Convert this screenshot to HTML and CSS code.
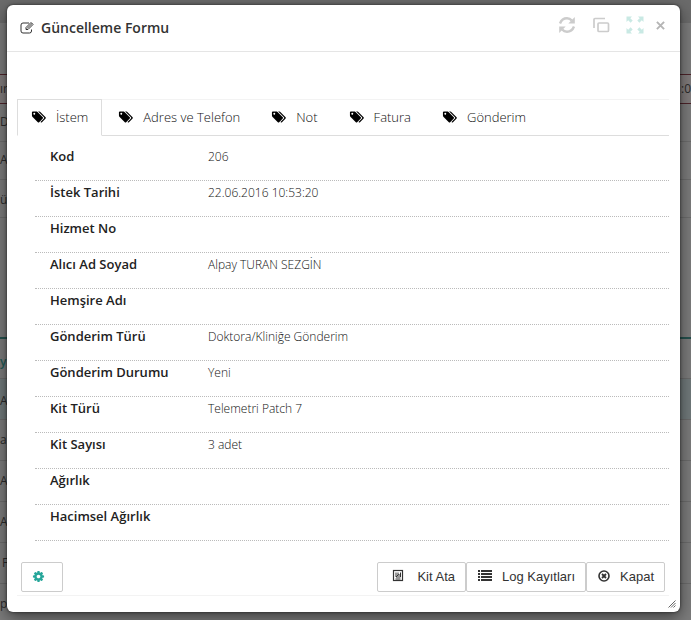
FILE: index.html
```html
<!DOCTYPE html>
<html lang="tr">
<head>
<meta charset="utf-8">
<meta name="viewport" content="width=device-width, initial-scale=1">
<title>Güncelleme Formu</title>
<link rel="stylesheet" href="styles.css">
</head>
<body>
<svg class="sprite" aria-hidden="true">
  <symbol id="tags" viewBox="0 0 2048 1792"><path d="M576 448q0-53-37.5-90.5t-90.5-37.5-90.5 37.5-37.5 90.5 37.5 90.5 90.5 37.5 90.5-37.5 37.5-90.5zm1067 576q0 53-37 90l-491 492q-39 37-91 37-53 0-90-37l-715-716q-38-37-64.5-101t-26.5-117v-416q0-52 38-90t90-38h416q53 0 117 26.5t102 64.5l715 714q37 39 37 91zm384 0q0 53-37 90l-491 492q-39 37-91 37-36 0-59-14t-53-45l470-470q37-37 37-90 0-52-37-91l-715-714q-38-38-102-64.5t-117-26.5h224q53 0 117 26.5t102 64.5l715 714q37 39 37 91z"/></symbol>
</svg>

<div class="page" aria-hidden="true">
  <div class="bar"></div>
  <div class="spacer"></div>
  <div class="alert"><span>ır</span><span>:0</span></div>
  <div class="line">D</div>
  <div class="line">A</div>
  <div class="line last">ü</div>
  <div class="gap"></div>
  <div class="grid-head">y</div>
  <div class="grid-row active">A</div>
  <div class="grid-row">a</div>
  <div class="grid-row">A</div>
  <div class="grid-row">A</div>
  <div class="grid-row indent">F</div>
  <div class="grid-row">p</div>
  <div class="grid-foot"><i></i><i></i><i></i><i></i><i></i><i></i></div>
</div>

<div class="overlay">
<section class="dialog" role="dialog" aria-labelledby="title">
  <header class="head">
    <svg class="edit" viewBox="0 0 14 14" fill="none" stroke="currentColor"><path d="M9 2H3Q1 2 1 4v6q0 2 2 2h6.500q2 0 2-2V8.500"/><path d="M6 6.500 11 1.500 13 3.500 8 8.500H6z"/><path d="m7 7.500 5-5"/></svg>
    <h1 id="title">Güncelleme Formu</h1>
    <div class="tools">
      <button type="button" aria-label="Yenile"><svg class="tool" viewBox="0 0 18 18"><path d="M2 7.500Q4 2.300 9 2.300q3 0 4.800 2.200" fill="none" stroke="currentColor" stroke-width="2.400"/><path d="M16.800 1v6.500h-6.500z" fill="currentColor"/><path d="M16 10.500Q14 15.700 9 15.700q-3 0-4.800-2.200" fill="none" stroke="currentColor" stroke-width="2.400"/><path d="M1.200 17v-6.500h6.500z" fill="currentColor"/></svg></button>
      <button type="button" aria-label="Pencere"><svg class="tool" viewBox="0 0 18 18" fill="none" stroke="currentColor" stroke-width="1.700"><path d="M2 12V3.500q0-1 1-1h10"/><rect x="6" y="7" width="10.500" height="8.500" rx="1"/></svg></button>
      <button type="button" class="expand" aria-label="Tam ekran"><svg class="tool" viewBox="0 0 18 18"><path d="M.5.500H6L4.300 2.200l2.400 2.400-2.100 2.100-2.400-2.400L.5 6zM17.500.500H12l1.700 1.700-2.400 2.400 2.100 2.100 2.400-2.400L17.500 6zM.5 17.500H6l-1.700-1.700 2.400-2.400-2.100-2.100-2.400 2.400L.5 12zM17.500 17.500H12l1.700-1.700-2.400-2.400 2.100-2.100 2.400 2.400L17.500 12z" fill="currentColor"/></svg></button>
      <button type="button" class="close" aria-label="Kapat"><svg viewBox="0 0 8 8" fill="none" stroke="currentColor" stroke-width="1.700"><path d="m.8.8 6.400 6.400M7.200.8.8 7.200"/></svg></button>
    </div>
  </header>

  <div class="body">
    <nav class="tabs">
      <a class="on" href="#istem"><svg><use href="#tags"/></svg>İstem</a>
      <a href="#adres"><svg><use href="#tags"/></svg>Adres ve Telefon</a>
      <a href="#not"><svg><use href="#tags"/></svg>Not</a>
      <a href="#fatura"><svg><use href="#tags"/></svg>Fatura</a>
      <a href="#gonderim"><svg><use href="#tags"/></svg>Gönderim</a>
    </nav>

    <dl class="fields" id="istem">
      <div><dt>Kod</dt><dd>206</dd></div>
      <div><dt>İstek Tarihi</dt><dd>22.06.2016 10:53:20</dd></div>
      <div><dt>Hizmet No</dt><dd></dd></div>
      <div><dt>Alıcı Ad Soyad</dt><dd>Alpay TURAN SEZGİN</dd></div>
      <div><dt>Hemşire Adı</dt><dd></dd></div>
      <div><dt>Gönderim Türü</dt><dd>Doktora/Kliniğe Gönderim</dd></div>
      <div><dt>Gönderim Durumu</dt><dd>Yeni</dd></div>
      <div><dt>Kit Türü</dt><dd>Telemetri Patch 7</dd></div>
      <div><dt>Kit Sayısı</dt><dd>3 adet</dd></div>
      <div><dt>Ağırlık</dt><dd></dd></div>
      <div><dt>Hacimsel Ağırlık</dt><dd></dd></div>
    </dl>

    <footer class="actions">
      <button type="button" class="btn settings" aria-label="Ayarlar"><svg viewBox="0 0 1792 1792" fill="currentColor"><path d="M1152 896q0-106-75-181t-181-75-181 75-75 181 75 181 181 75 181-75 75-181zm512-109v222q0 12-8 23t-20 13l-185 28q-19 54-39 91 35 50 107 138 10 12 10 25t-9 23q-27 37-99 108t-94 71q-12 0-26-9l-138-108q-44 23-91 38-16 136-29 186-7 28-36 28h-222q-14 0-24.500-8.500t-11.500-21.500l-28-184q-49-16-90-37l-141 107q-10 9-25 9-14 0-25-11-126-114-165-168-7-10-7-23 0-12 8-23 15-21 51-66.500t54-70.500q-27-50-41-99l-183-27q-13-2-21-12.500t-8-23.500v-222q0-12 8-23t19-13l186-28q14-46 39-92-40-57-107-138-10-12-10-24 0-10 9-23 26-36 98.500-107.500t94.500-71.500q13 0 26 10l138 107q44-23 91-38 16-136 29-186 7-28 36-28h222q14 0 24.500 8.500t11.500 21.500l28 184q49 16 90 37l142-107q9-9 24-9 13 0 25 10 129 119 165 170 7 8 7 22 0 12-8 23-15 21-51 66.500t-54 70.500q26 50 41 98l183 28q13 2 21 12.500t8 23.500z"/></svg></button>
      <div class="group">
        <button type="button" class="btn"><svg class="wide" viewBox="0 0 18 14" fill="none" stroke="currentColor"><rect x="4.500" y="1.500" width="9" height="10" stroke-width="1.200"/><path d="M6.500 10h5"/><path d="M7 3.500V8h4.500V3.500M9 3.500V6h2.500M7 8l2.500-2.500"/></svg>Kit Ata</button>
        <button type="button" class="btn"><svg viewBox="0 0 14 14" fill="currentColor"><path d="M0 1h2v2H0zM3 1h11v2H3zM0 4h2v2H0zM3 4h11v2H3zM0 7h2v2H0zM3 7h11v2H3zM0 10h2v2H0zM3 10h11v2H3z"/></svg>Log Kayıtları</button>
        <button type="button" class="btn"><svg class="narrow" viewBox="1 1 12 12" fill="none" stroke="currentColor"><circle cx="7" cy="7" r="5" stroke-width="1.600"/><path d="m5 5 4 4M9 5 5 9" stroke-width="1.800"/></svg>Kapat</button>
      </div>
    </footer>
  </div>
  <svg class="grip" viewBox="0 0 8 8" fill="none" stroke="#666"><path d="M.5 7.500l7-7M3 7.500 7.500 3M5.500 7.500l2-2"/></svg>
</section>
</div>
</body>
</html>
```

FILE: styles.css
```css
* { box-sizing: border-box; }

body {
  margin: 0;
  height: 100vh;
  overflow: hidden;
  font-family: "Open Sans", sans-serif;
  font-size: 13px;
  color: #333;
  background: #7b7b7b;
}

button { font: inherit; cursor: pointer; }

.sprite { position: absolute; width: 0; height: 0; }

/* dimmed page under the dialog */
.page {
  position: absolute;
  inset: 0;
  overflow: hidden;
  font-size: 12px;
  color: #2b2b2b;
}
.bar { height: 23px; background: #6b6b6b; }
.spacer { height: 51px; }
.alert {
  display: flex;
  justify-content: space-between;
  height: 30px;
  line-height: 28px;
  border-top: 1px solid #4d2329;
  border-bottom: 1px solid #4d2329;
  background: #807b7b;
}
.line { height: 38px; line-height: 36px; border-bottom: 1px solid #6c6c6c; }
.line.last { line-height: 40px; }
.gap { height: 119px; }
.grid-head {
  height: 42px;
  line-height: 46px;
  border-top: 2px solid #24504d;
  border-bottom: 1px solid #6b6b6b;
  color: #1f5a56;
  font-weight: 600;
}
.grid-row {
  height: 41px;
  line-height: 40px;
  border-bottom: 1px solid #6b6b6b;
}
.grid-row.active { background: #70797a; line-height: 44px; }
.grid-row.indent { padding-left: 2px; }
.grid-foot { display: grid; grid-template-columns: 1fr 2fr 4fr 2fr 2fr 3px; height: 40px; }
.grid-foot i { border-left: 1px solid #696969; }

.overlay {
  position: absolute;
  inset: 0;
  padding: 5px 11px 8px 7px;
}
.dialog {
  position: relative;
  height: 100%;
  display: flex;
  flex-direction: column;
  background: #fff;
  border-radius: 6px;
  box-shadow: 0 5px 15px rgba(0, 0, 0, .5), 0 0 3px rgba(0, 0, 0, .6);
}

.head {
  display: flex;
  align-items: center;
  height: 47px;
  padding: 0 15px 0 13px;
  border-bottom: 1px solid #e5e5e5;
}
.edit { width: 14px; height: 14px; margin-right: 7px; }
h1 {
  flex: 1;
  margin: 0;
  font-size: 14px;
  font-weight: 600;
  line-height: 20px;
}
.tools { display: flex; align-items: center; gap: 16px; margin-top: -6px; }
.tools button {
  display: flex;
  padding: 0;
  border: 0;
  background: none;
  color: #ccc;
}
.tool { width: 18px; height: 18px; }
.tools .expand { color: #c9e9e4; }
.tools .close { margin-left: -4px; color: #b5b5b5; }
.close svg { width: 9px; height: 9px; }

.body {
  flex: 1;
  display: flex;
  flex-direction: column;
  padding: 47px 11px 0 10px;
}

.tabs { display: flex; border-bottom: 1px solid #ddd; border-top: 1px solid #f3f3f3; height: 37px; }
.tabs a {
  display: flex;
  align-items: center;
  height: 36px;
  margin-top: -1px;
  padding: 0 14px;
  border: 1px solid transparent;
  color: #111;
  font-weight: 300;
  text-decoration: none;
  line-height: 18px;
  margin-right: 1px;
}
.tabs a.on { height: 37px; border-color: #ddd; border-bottom-color: #fff; padding: 0 13px 1px; background: #fff; }
.tabs svg { width: 15px; height: 14px; margin-right: 10px; fill: #000; }

.fields { margin: 9px 0 0; padding-left: 18px; }
.fields div {
  display: flex;
  height: 36px;
  padding-left: 15px;
  border-bottom: 1px dotted #bbb;
  line-height: 23px;
}
.fields dt { width: 158px; font-weight: 600; color: #222; }
.fields dd { margin: 0; font-size: 12px; font-weight: 300; line-height: 24px; color: #111; }

.actions {
  display: flex;
  justify-content: space-between;
  margin-top: 21px;
  padding: 0 4px 3px 4px;
  border-bottom: 1px solid #f3f3f3;
}
.group { display: flex; }
.btn {
  display: flex;
  align-items: center;
  height: 30px;
  padding: 0 10px 2px 11px;
  border: 1px solid #ccc;
  border-radius: 2px;
  background: #fff;
  color: #333;
  font-family: "Liberation Sans", sans-serif;
  font-size: 13px;
}
.btn svg { width: 14px; height: 14px; margin-right: 10px; }
.btn .wide { width: 18px; }
.btn .narrow { width: 12px; height: 12px; }
.btn.settings { width: 42px; padding: 0 0 2px 10px; color: #26a69a; }
.btn.settings svg { width: 13px; height: 13px; margin: 0; }

.grip { position: absolute; right: 4px; bottom: 4px; width: 8px; height: 8px; }
```
